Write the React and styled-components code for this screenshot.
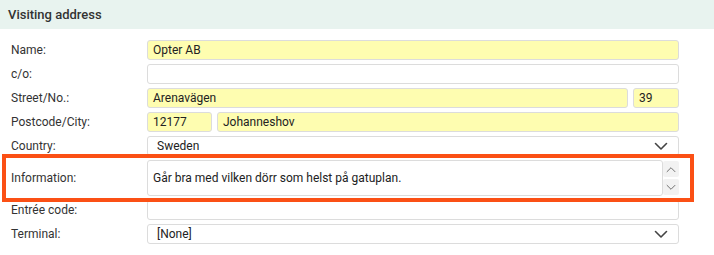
import React from 'react'
import styled, { createGlobalStyle } from 'styled-components'

const GlobalStyle = createGlobalStyle`
  body {
    margin: 0;
    background: #fff;
    font-family: Roboto, "Liberation Sans", sans-serif;
  }
`

function Chevron({ up, size = 14, color = '#444', stroke = 1.6 }) {
  return (
    <svg width={size} height={size / 2 + 2} viewBox="0 0 14 9" fill="none">
      <path
        d={up ? 'M1.5 7.5 L7 2 L12.5 7.5' : 'M1.5 1.5 L7 7 L12.5 1.5'}
        stroke={color}
        strokeWidth={stroke}
        strokeLinecap="round"
        strokeLinejoin="round"
      />
    </svg>
  )
}

function App() {
  return (
    <>
      <GlobalStyle />
      <Panel>
        <Header>Visiting address</Header>
        <Form>
          <Label>Name:</Label>
          <Input $filled>Opter AB</Input>

          <Label>c/o:</Label>
          <Input />

          <Label>Street/No.:</Label>
          <Split $cols="1fr 46px">
            <Input $filled>Arenavägen</Input>
            <Input $filled>39</Input>
          </Split>

          <Label>Postcode/City:</Label>
          <Split $cols="65px 1fr">
            <Input $filled>12177</Input>
            <Input $filled>Johanneshov</Input>
          </Split>

          <Label>Country:</Label>
          <Select>
            <span>Sweden</span>
            <Chevron />
          </Select>

          <Label $tall>Information:</Label>
          <TextRow>
            <TextArea>Går bra med vilken dörr som helst på gatuplan.</TextArea>
            <Spinner>
              <SpinButton><Chevron up size={10} color="#666" stroke={1.3} /></SpinButton>
              <SpinButton><Chevron size={10} color="#666" stroke={1.3} /></SpinButton>
            </Spinner>
          </TextRow>

          <Label>Entrée code:</Label>
          <Input />

          <Label>Terminal:</Label>
          <Select>
            <span>[None]</span>
            <Chevron />
          </Select>
        </Form>
        <Highlight />
      </Panel>
    </>
  )
}

export default App

const Panel = styled.div`
  position: relative;
  width: 714px;
  height: 255px;
  background: #fff;
`

const Header = styled.div`
  height: 29px;
  background: #e8f3ef;
  display: flex;
  align-items: center;
  padding-left: 8px;
  font-size: 13px;
  font-weight: 500;
  color: #333;
`

const Form = styled.div`
  display: grid;
  grid-template-columns: 136px 1fr;
  row-gap: 4px;
  padding: 11px 35px 0 11px;
`

const Label = styled.div`
  display: flex;
  align-items: center;
  font-size: 12px;
  color: #333;
  height: ${({ $tall }) => ($tall ? '36px' : '20px')};
`

const Input = styled.div`
  box-sizing: border-box;
  height: 20px;
  border: 1px solid #dcdcdc;
  border-radius: 3px;
  background: ${({ $filled }) => ($filled ? '#fefdb0' : '#fff')};
  padding: 0 5px;
  font-size: 12px;
  color: #222;
  display: flex;
  align-items: center;
`

const Split = styled.div`
  display: grid;
  grid-template-columns: ${({ $cols }) => $cols};
  gap: 5px;
`

const Select = styled(Input)`
  justify-content: space-between;
  padding: 0 10px 0 9px;
`

const TextRow = styled.div`
  display: flex;
  height: 36px;
`

const TextArea = styled.div`
  box-sizing: border-box;
  flex: 1;
  border: 1px solid #dcdcdc;
  border-radius: 3px;
  padding: 0 5px;
  font-size: 12px;
  color: #222;
  display: flex;
  align-items: center;
`

const Spinner = styled.div`
  width: 16px;
  display: flex;
  flex-direction: column;
  justify-content: center;
  gap: 2px;
`

const SpinButton = styled.div`
  height: 16px;
  background: #f2f2f2;
  border-radius: 2px;
  display: flex;
  align-items: center;
  justify-content: center;
`

const Highlight = styled.div`
  position: absolute;
  left: 2px;
  top: 154px;
  width: 692px;
  height: 48px;
  box-sizing: border-box;
  border: 4px solid #fb5015;
  pointer-events: none;
`
